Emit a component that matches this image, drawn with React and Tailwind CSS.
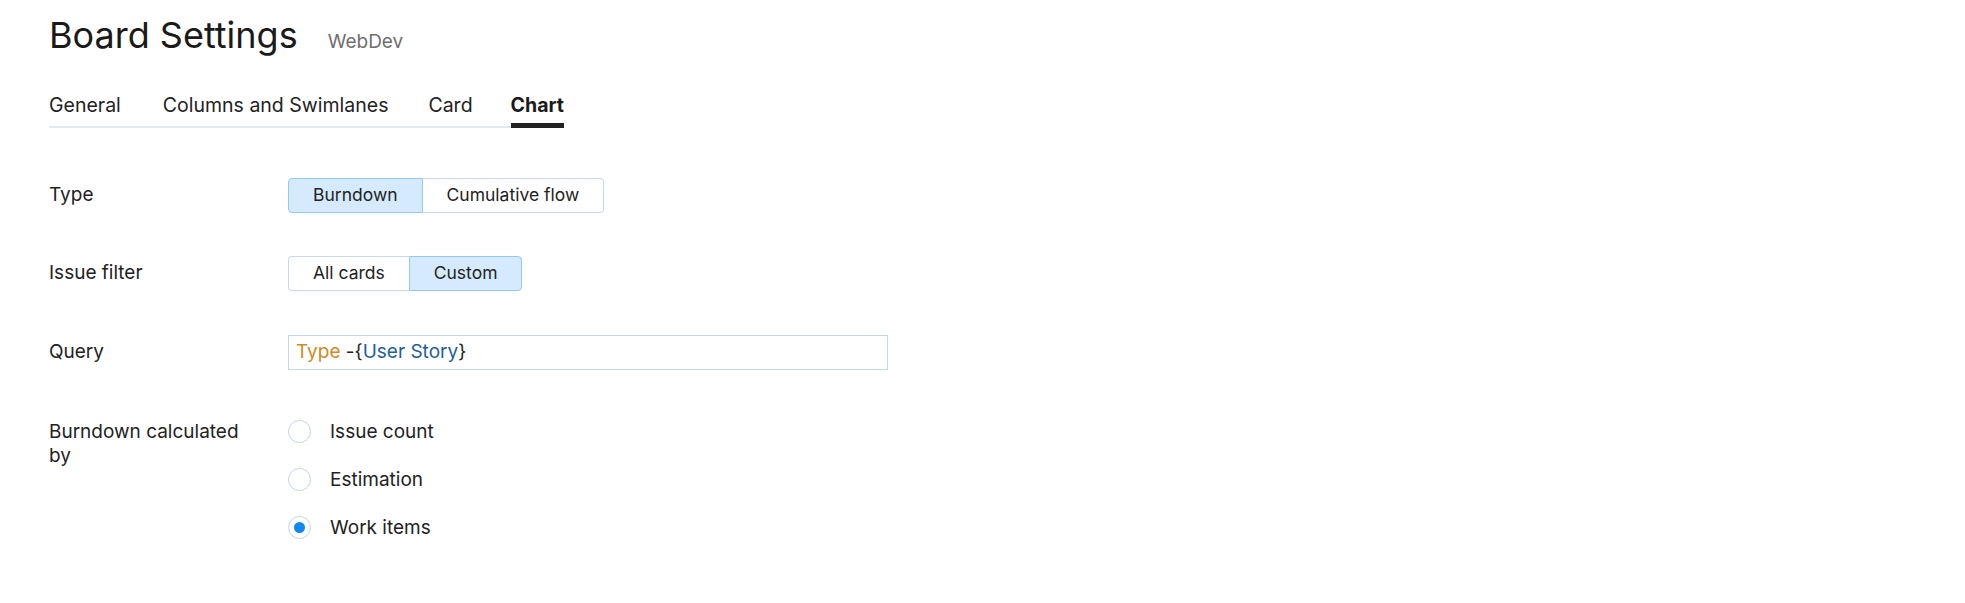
import { useState } from 'react';

// spacing before each tab, measured from the design
const TABS = [
  { name: 'General', ml: '' },
  { name: 'Columns and Swimlanes', ml: 'ml-[42px]' },
  { name: 'Card', ml: 'ml-[40px]' },
  { name: 'Chart', ml: 'ml-[38px]' },
];

function Segmented({ options, value, onChange }) {
  return (
    <div className="flex h-[35px]">
      {options.map((opt, i) => {
        const active = opt === value;
        const first = i === 0;
        const last = i === options.length - 1;
        const nextActive = options[i + 1] === value;
        const prevActive = options[i - 1] === value;
        return (
          <button
            key={opt}
            onClick={() => onChange(opt)}
            className={[
              'px-[24px] text-[17.5px] text-[#222] border',
              active ? 'bg-[#d5ebfd] border-[#92c8f4]' : 'bg-white border-[#c8d9ea]',
              first ? 'rounded-l-[4px]' : '',
              last ? 'rounded-r-[4px]' : '',
              !active && nextActive ? 'border-r-0' : '',
              !active && prevActive ? 'border-l-0' : '',
            ].join(' ')}
          >
            {opt}
          </button>
        );
      })}
    </div>
  );
}

function Radio({ label, checked, onSelect }) {
  return (
    <label className="flex items-center gap-[19px] h-6 cursor-pointer" onClick={onSelect}>
      <span className="w-[23px] h-[23px] rounded-full border border-[#c2d4e6] flex items-center justify-center">
        {checked && <span className="w-[11px] h-[11px] rounded-full bg-[#1289f0]" />}
      </span>
      <span className="text-[19px] leading-6 text-[#222]">{label}</span>
    </label>
  );
}

export default function App() {
  const [tab, setTab] = useState('Chart');
  const [type, setType] = useState('Burndown');
  const [filter, setFilter] = useState('Custom');
  const [calc, setCalc] = useState('Work items');

  return (
    <div className="min-h-screen bg-white font-['Inter',sans-serif] text-[#222] px-[49px] pt-[14px]">
      <div className="flex items-baseline gap-[30px]">
        <h1 className="text-[36px] leading-[42px] font-normal text-[#1a1a1a]">Board Settings</h1>
        <span className="text-[19px] text-[#707070]">WebDev</span>
      </div>

      <div className="mt-[36px] inline-flex border-b-2 border-[#e4e7eb]">
        {TABS.map((t) => (
          <button
            key={t.name}
            onClick={() => setTab(t.name)}
            className={
              'text-[19.5px] leading-6 pb-[6px] -mb-[2px] border-b-[5px] ' +
              t.ml +
              ' ' +
              (t.name === tab ? 'font-bold text-[#1a1a1a] border-[#222]' : 'text-[#222] border-transparent')
            }
          >
            {t.name}
          </button>
        ))}
      </div>

      <div className="mt-[50px] flex flex-col">
        <div className="grid grid-cols-[200px_1fr] gap-x-[39px] items-center">
          <span className="text-[19px] leading-6">Type</span>
          <Segmented options={['Burndown', 'Cumulative flow']} value={type} onChange={setType} />
        </div>

        <div className="mt-[43px] grid grid-cols-[200px_1fr] gap-x-[39px] items-center">
          <span className="text-[19px] leading-6">Issue filter</span>
          <Segmented options={['All cards', 'Custom']} value={filter} onChange={setFilter} />
        </div>

        <div className="mt-[44px] grid grid-cols-[200px_1fr] gap-x-[39px] items-center">
          <span className="text-[19px] leading-6">Query</span>
          <div className="w-[600px] h-[35px] border-[1.5px] border-[#c3d7ea] px-[7px] flex items-center text-[19px]">
            <span className="text-[#d08b1e]">Type</span>
            <span className="whitespace-pre text-[#222]"> -{'{'}</span>
            <span className="text-[#1f5e9e]">User Story</span>
            <span className="text-[#222]">{'}'}</span>
          </div>
        </div>

        <div className="mt-[50px] grid grid-cols-[200px_1fr] gap-x-[39px] items-start">
          <span className="text-[19px] leading-6">Burndown calculated by</span>
          <div className="flex flex-col gap-6">
            {['Issue count', 'Estimation', 'Work items'].map((o) => (
              <Radio key={o} label={o} checked={calc === o} onSelect={() => setCalc(o)} />
            ))}
          </div>
        </div>
      </div>
    </div>
  );
}
